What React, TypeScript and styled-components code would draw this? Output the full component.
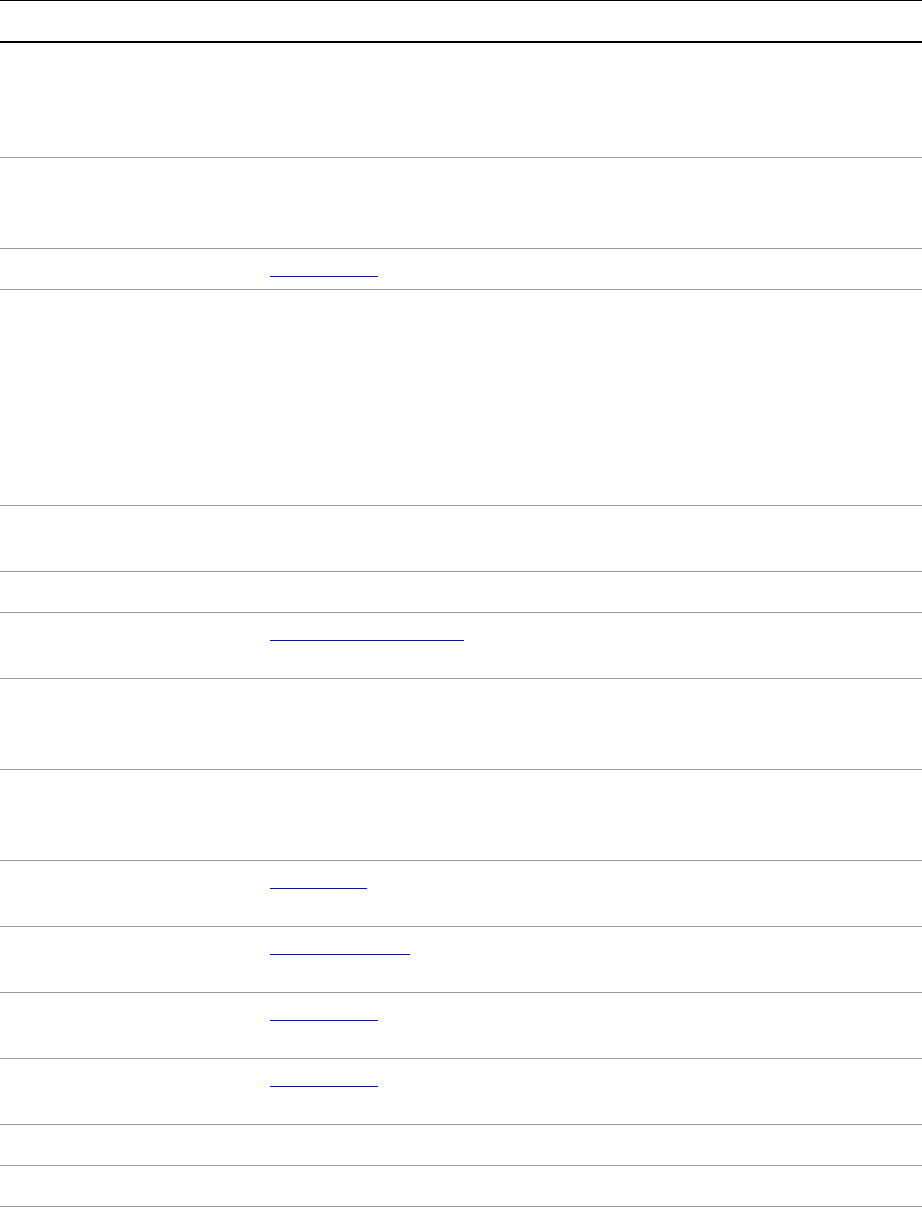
import styled, { createGlobalStyle } from 'styled-components';

const GlobalStyle = createGlobalStyle`
  html, body {
    margin: 0;
    padding: 0;
    background: #fff;
    font-family: "Liberation Sans", Arial, sans-serif;
    font-size: 16px;
  }
`;

const Table = styled.div`
  width: 100%;
  display: flex;
  flex-direction: column;
`;

const HeaderRow = styled.div`
  display: grid;
  grid-template-columns: 262px 1fr;
  height: 43px;
  box-sizing: border-box;
  border-top: 1px solid #000;
  border-bottom: 2px solid #000;
`;

const Row = styled.div<{ $h: number }>`
  display: grid;
  grid-template-columns: 262px 1fr;
  height: ${({ $h }) => $h}px;
  box-sizing: border-box;
  border-bottom: 1px solid #999;
`;

const Cell = styled.div`
  padding: 8px;
  line-height: 25px;
  color: #000;
`;

const Ref = styled.a<{ $w: number }>`
  display: block;
  width: ${({ $w }) => $w}px;
  height: 19px;
  border-bottom: 1px solid #00f;
  text-decoration: none;
`;

type RowData = { h: number; link?: number };

const rows: RowData[] = [
  { h: 115 },
  { h: 91 },
  { h: 41, link: 108 },
  { h: 216 },
  { h: 66 },
  { h: 41 },
  { h: 66, link: 194 },
  { h: 91 },
  { h: 91 },
  { h: 66, link: 97 },
  { h: 66, link: 140 },
  { h: 66, link: 108 },
  { h: 66, link: 108 },
  { h: 41 },
  { h: 41 },
];

export default function App() {
  return (
    <>
      <GlobalStyle />
      <Table>
        <HeaderRow>
          <Cell />
          <Cell />
        </HeaderRow>
        {rows.map((row, i) => (
          <Row key={i} $h={row.h}>
            <Cell />
            <Cell>{row.link ? <Ref href="#" $w={row.link} aria-label="link" /> : null}</Cell>
          </Row>
        ))}
      </Table>
    </>
  );
}
